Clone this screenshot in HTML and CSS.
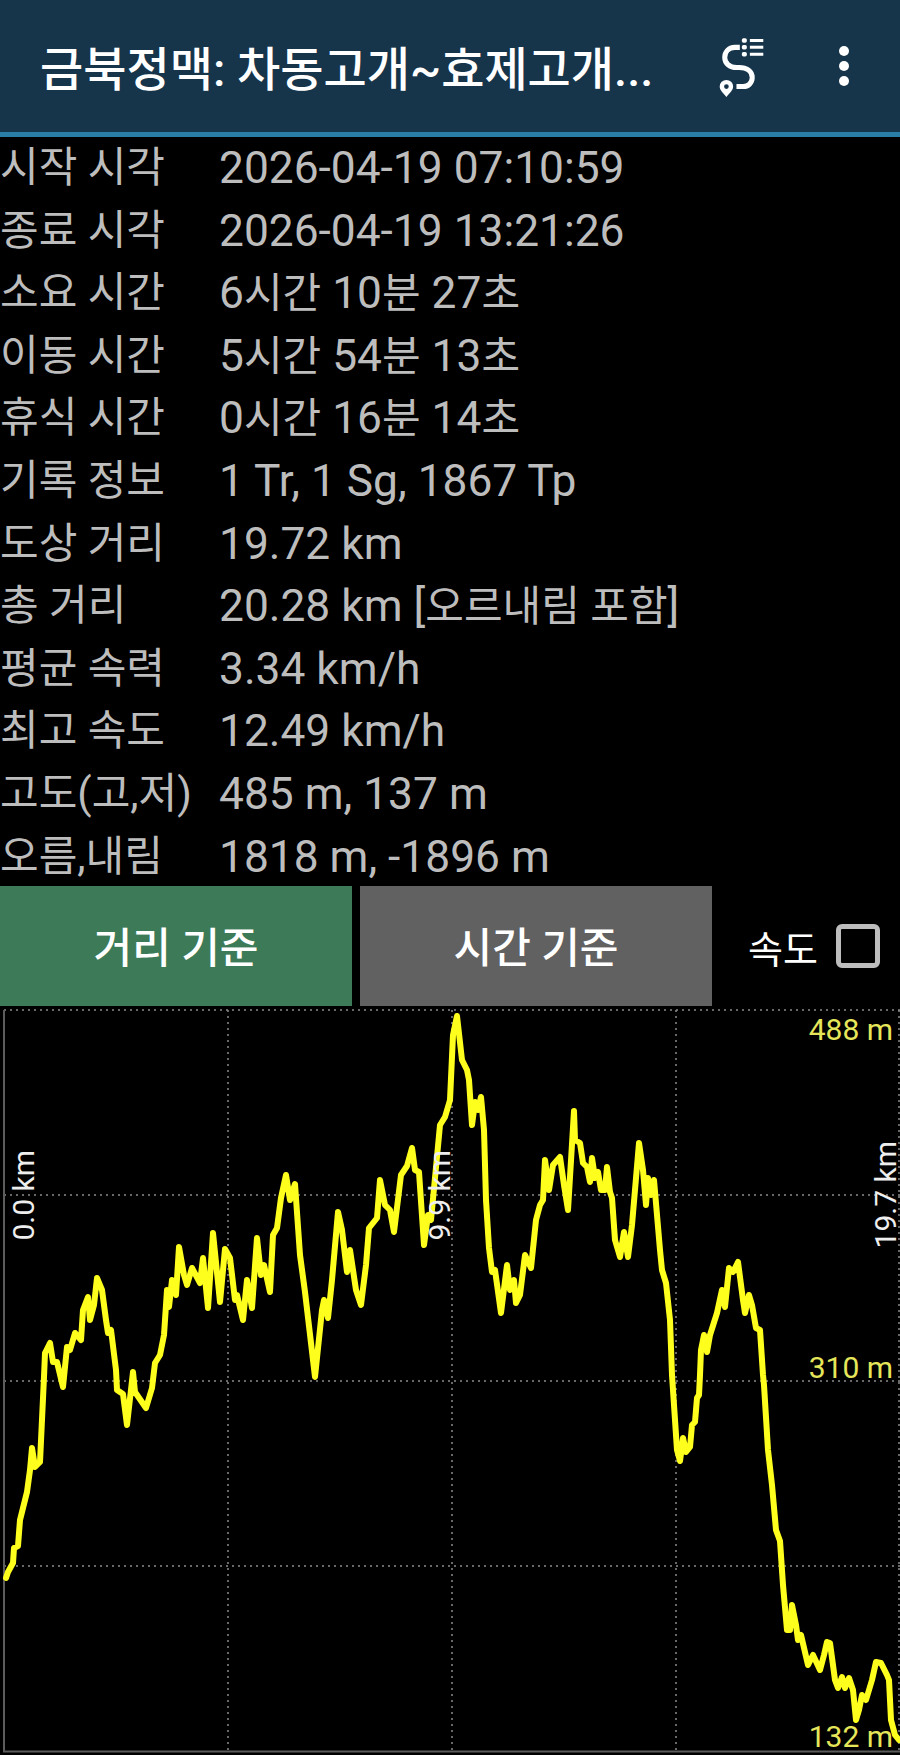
FILE: index.html
```html
<!DOCTYPE html>
<html lang="ko">
<head>
  <meta charset="utf-8">
  <meta name="viewport" content="width=device-width, initial-scale=1">
  <link rel="stylesheet" href="styles.css">
</head>
<body>
  <header class="topbar">
    <h1 class="title">금북정맥: 차동고개~효제고개...</h1>
    <svg class="route-icon" viewBox="118 52 134 176" width="45" height="59">
      <path class="route-line" d="M180 80H165C146 80 135 94 135 110C135 128 150 140 170 140H178C200 140 217 150 217 170C217 186 205 197 190 197H170"/>
      <path class="route-fill" fill-rule="evenodd" d="M140 228C128 214 120 207 120 197A20 20 0 0 1 160 197C160 207 152 214 140 228ZM140 190A7 7 0 1 0 140 204A7 7 0 1 0 140 190Z"/>
      <rect class="route-fill" x="186" y="53" width="15" height="13" rx="5"/>
      <rect class="route-fill" x="186" y="73" width="15" height="13" rx="5"/>
      <rect class="route-fill" x="186" y="94" width="15" height="13" rx="5"/>
      <rect class="route-fill" x="210" y="55" width="40" height="9"/>
      <rect class="route-fill" x="210" y="75" width="40" height="9"/>
      <rect class="route-fill" x="210" y="96" width="40" height="9"/>
    </svg>
    <div class="more"><i></i><i></i><i></i></div>
  </header>

  <dl class="info">
    <div class="row"><dt>시작 시각</dt><dd>2026-04-19 07:10:59</dd></div>
    <div class="row"><dt>종료 시각</dt><dd>2026-04-19 13:21:26</dd></div>
    <div class="row"><dt>소요 시간</dt><dd>6<span class="ko">시간</span> 10<span class="ko">분</span> 27<span class="ko">초</span></dd></div>
    <div class="row"><dt>이동 시간</dt><dd>5<span class="ko">시간</span> 54<span class="ko">분</span> 13<span class="ko">초</span></dd></div>
    <div class="row"><dt>휴식 시간</dt><dd>0<span class="ko">시간</span> 16<span class="ko">분</span> 14<span class="ko">초</span></dd></div>
    <div class="row"><dt>기록 정보</dt><dd>1 Tr, 1 Sg, 1867 Tp</dd></div>
    <div class="row"><dt>도상 거리</dt><dd>19.72 km</dd></div>
    <div class="row"><dt>총 거리</dt><dd>20.28 km [<span class="ko">오르내림 포함</span>]</dd></div>
    <div class="row"><dt>평균 속력</dt><dd>3.34 km/h</dd></div>
    <div class="row"><dt>최고 속도</dt><dd>12.49 km/h</dd></div>
    <div class="row"><dt>고도(고,저)</dt><dd>485 m, 137 m</dd></div>
    <div class="row"><dt>오름,내림</dt><dd>1818 m, -1896 m</dd></div>
  </dl>

  <div class="controls">
    <button type="button" class="tab tab-on">거리 기준</button>
    <button type="button" class="tab">시간 기준</button>
    <label class="speed">속도<span class="check"></span></label>
  </div>

  <div class="chart">
    <svg class="plot" viewBox="0 1006 900 749" width="900" height="749">
      <path class="grid" d="M4 1010H900M4 1195H900M4 1381H900M4 1566H900M228 1010V1751M452 1010V1751M676 1010V1751M899 1010V1751"/>
      <path class="axis" d="M4 1010V1751.5H900"/>
      <polyline class="elev" points="6,1578 8,1572 13,1563 14,1548 18,1546 20,1520 27,1492 30,1470 32,1448 35,1467 40,1462 44,1377 45,1353 50,1343 53,1362 57,1362 63,1387 67,1347 70,1350 75,1333 81,1340 83,1310 88,1297 90,1320 94,1305 97,1278 102,1290 106,1320 108,1333 111,1330 116,1370 117,1390 123,1394 127,1425 133,1372 135,1392 146,1408 152,1388 155,1363 160,1355 164,1335 167,1290 169,1307 172,1280 176,1295 179,1247 184,1275 187,1285 192,1268 200,1283 203,1258 208,1308 213,1233 220,1302 225,1249 230,1258 235,1300 237,1295 243,1320 247,1280 252,1308 257,1238 261,1275 264,1265 270,1292 273,1235 277,1228 281,1198 286,1175 290,1200 295,1184 300,1255 305,1292 315,1377 322,1310 324,1300 328,1318 332,1280 338,1212 342,1230 347,1272 350,1250 356,1290 361,1305 366,1265 369,1228 377,1218 380,1180 385,1205 390,1210 394,1232 401,1175 407,1166 412,1148 415,1170 419,1172 424,1245 428,1215 431,1220 440,1125 445,1117 450,1100 453,1035 457,1016 462,1060 467,1070 469,1080 472,1125 475,1102 478,1110 481,1097 484,1130 486,1200 489,1248 492,1272 495,1270 501,1313 507,1265 510,1290 514,1280 516,1303 520,1295 525,1255 531,1268 536,1220 540,1205 543,1200 545,1160 549,1190 553,1165 560,1157 564,1185 568,1210 574,1111 575,1140 580,1143 583,1163 587,1167 590,1182 592,1158 595,1178 598,1172 601,1190 605,1190 607,1167 610,1192 612,1198 615,1240 620,1257 624,1232 628,1257 632,1225 639,1143 643,1170 646,1205 648,1178 651,1195 654,1180 660,1250 662,1270 666,1283 670,1320 672,1375 675,1420 677,1450 680,1461 683,1438 686,1452 690,1447 692,1425 695,1422 697,1398 699,1395 700,1375 701,1350 704,1335 707,1352 710,1335 717,1313 722,1290 725,1307 729,1268 733,1272 738,1262 743,1300 745,1313 749,1295 752,1305 756,1328 760,1330 763,1375 764,1385 768,1450 772,1485 776,1530 780,1541 783,1585 787,1630 790,1630 792,1605 796,1625 798,1640 801,1635 808,1665 813,1655 820,1670 824,1655 827,1642 830,1643 835,1680 838,1688 842,1677 845,1688 849,1678 853,1690 856,1720 859,1710 862,1695 866,1700 872,1680 876,1662 881,1663 887,1675 889,1680 891,1720 895,1735 899,1740"/>
    </svg>
    <span class="alt alt-top">488 m</span>
    <span class="alt alt-mid">310 m</span>
    <span class="alt alt-low">132 m</span>
    <span class="dist dist-start">0.0 km</span>
    <span class="dist dist-mid">9.9 km</span>
    <span class="dist dist-end">19.7 km</span>
  </div>
</body>
</html>
```

FILE: styles.css
```css
html, body {margin: 0; padding: 0; background: #000;}
body {width: 900px; font-family: Roboto, "Noto Sans CJK KR", sans-serif; overflow: hidden;}

.topbar {
  display: flex;
  align-items: center;
  height: 132px;
  padding-left: 40px;
  background: #16344a;
  border-bottom: 5px solid #2a7da6;
}
.title {flex: 1; margin: 0 0 2px; color: #fff; font-size: 47px; font-weight: 500; white-space: nowrap;}
.route-icon {margin-right: 75px; margin-top: 2px;}
.route-line {fill: none; stroke: #fff; stroke-width: 15;}
.route-fill {fill: #fff;}
.more {display: flex; flex-direction: column; gap: 5px; margin-right: 51px;}
.more i {display: block; width: 10px; height: 10px; border-radius: 50%; background: #fff;}

.info {margin: 0 0 -2px;}
.row {display: grid; grid-template-columns: 219px 1fr; height: 62.6px; line-height: 62.6px; font-size: 42px; color: #bdbdbd;}
.row dt, .row dd {margin: 0; white-space: nowrap;}
.row dd {font-size: 44.3px;}
.row .ko {font-size: 42px;}

.controls {position: relative; display: flex; gap: 8px; align-items: stretch; height: 120px;}
.tab {
  width: 352px;
  border: 0;
  padding: 0 0 4px;
  color: #fff;
  background: #616161;
  font: 500 42px Roboto, "Noto Sans CJK KR", sans-serif;
}
.tab-on {background: #3c7a58;}
.speed {display: flex; align-items: center; gap: 18px; margin-left: 28px; color: #fff; font-size: 38px;}
.check {display: block; width: 34px; height: 34px; border: 5px solid #bdbdbd; border-radius: 6px;}

.chart {position: relative; height: 749px;}
.plot {display: block;}
.grid {fill: none; stroke: #8a8a8a; stroke-width: 1.5; stroke-dasharray: 2 4;}
.axis {fill: none; stroke: #5c5c5c; stroke-width: 2;}
.elev {fill: none; stroke: #ffff1e; stroke-width: 6; stroke-linejoin: round; stroke-linecap: round;}

.alt {position: absolute; right: 7px; color: #e6e65a; font-size: 30px; line-height: 34px;}
.alt-top {top: 7px;}
.alt-mid {top: 345px;}
.alt-low {top: 714px;}

.dist {position: absolute; color: #eee; font-size: 30px; line-height: 30px; writing-mode: vertical-rl; transform: rotate(180deg); white-space: nowrap;}
.dist-start {left: 9px; bottom: 515px;}
.dist-mid {left: 425px; bottom: 515px;}
.dist-end {left: 871px; bottom: 507px;}
```
